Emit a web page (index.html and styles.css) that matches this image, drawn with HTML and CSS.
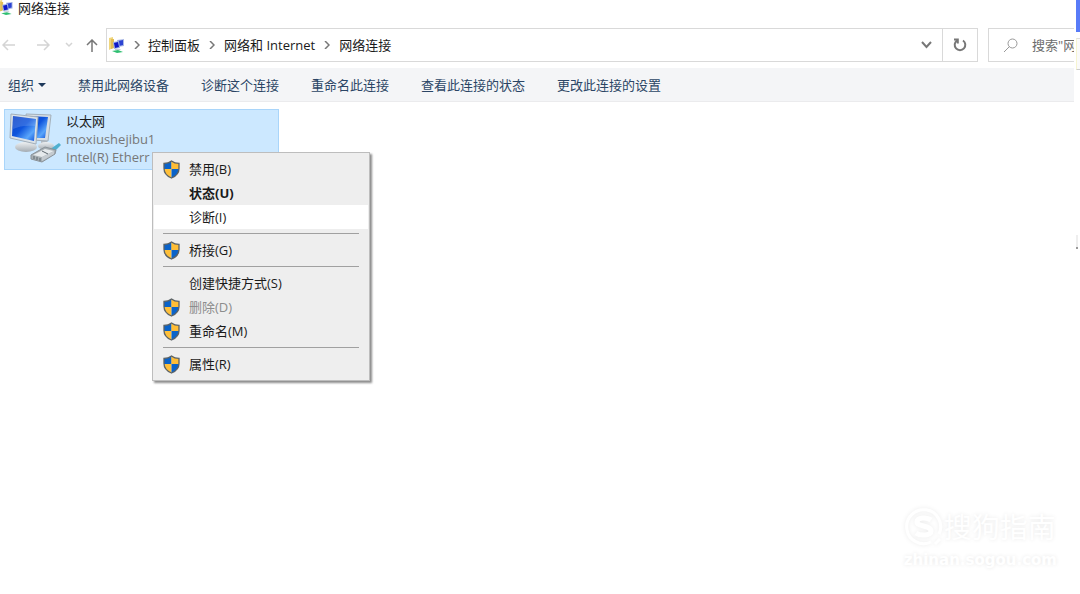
FILE: index.html
```html
<!DOCTYPE html>
<html lang="zh-CN">
<head>
    <meta charset="UTF-8">
    <meta name="viewport" content="width=device-width, initial-scale=1.0">
    <title>网络连接</title>
    <link rel="stylesheet" href="styles.css">
</head>
<body>
    <svg class="defs" aria-hidden="true">
        <defs>
            <linearGradient id="screen" x1="0" y1="0" x2="1" y2="1">
                <stop offset="0" stop-color="#0a3fc4"/>
                <stop offset="0.45" stop-color="#0f55dd"/>
                <stop offset="0.75" stop-color="#5aa6fb"/>
                <stop offset="1" stop-color="#0d4fd8"/>
            </linearGradient>
            <linearGradient id="metal" x1="0" y1="0" x2="0" y2="1">
                <stop offset="0" stop-color="#eef1f3"/>
                <stop offset="1" stop-color="#a3abb2"/>
            </linearGradient>
            <symbol id="shield" viewBox="0 0 17 19">
                <path d="M8.500 1C6.500 2.600 3.800 3.400 1 3.400V8.500C1 13 4 16.200 8.500 18Z" fill="#ffc03a"/>
                <path d="M8.500 1C6.500 2.600 3.800 3.400 1 3.400V9H8.500Z" fill="#0a63c9"/>
                <path d="M8.500 1C10.500 2.600 13.200 3.400 16 3.400V9H8.500Z" fill="#ffbd35"/>
                <path d="M16 9C15.800 13 13 16.200 8.500 18V9Z" fill="#0a63c9"/>
                <path d="M8.500 1C6.500 2.600 3.800 3.400 1 3.400V8.500C1 13 4 16.200 8.500 18C13 16.200 16 13 16 8.500V3.400C13.200 3.400 10.500 2.600 8.500 1Z" fill="none" stroke="#5b6266" stroke-width="1.300"/>
            </symbol>
            <symbol id="network" viewBox="0 0 17 17">
                <path d="M1 1L5 0V11L1 13Z" fill="#f0d67c"/>
                <path d="M3 2H6V11L3 12Z" fill="#e2bd55"/>
                <path d="M9 3L16 2V9L10 10Z" fill="#aab9e6"/>
                <path d="M10 4L15 3V8L11 9Z" fill="#2c43d2"/>
                <path d="M5 5L11 4L12 11L6 12Z" fill="#9fb3e6"/>
                <path d="M6 6L10 5L11 10L7 11Z" fill="#1018c8"/>
                <path d="M7 12H12L13 13H7Z" fill="#c3cbd5"/>
                <path d="M4 14L10 13L15 15L9 16Z" fill="#2fbf71"/>
            </symbol>
        </defs>
    </svg>

    <div class="screen">
        <main class="window">
            <header class="titlebar">
                <svg class="title-icon"><use href="#network"/></svg>
                <h1>网络连接</h1>
            </header>

            <div class="navbar">
                <div class="nav-buttons">
                    <button class="dim" aria-label="后退"><svg width="14" height="12" viewBox="0 0 14 12"><path d="M13 6H1M6 1L1 6L6 11"/></svg></button>
                    <button class="dim" aria-label="前进"><svg width="14" height="12" viewBox="0 0 14 12"><path d="M1 6H13M8 1L13 6L8 11"/></svg></button>
                    <button class="dim" aria-label="最近"><svg width="8" height="6" viewBox="0 0 8 6"><path d="M1 1L4 4L7 1"/></svg></button>
                    <button class="up" aria-label="向上"><svg width="12" height="14" viewBox="0 0 12 14"><path d="M6 13V1M1 6L6 1L11 6"/></svg></button>
                </div>
                <div class="address">
                    <nav class="crumbs">
                        <svg class="crumb-icon"><use href="#network"/></svg>
                        <svg class="arrow" viewBox="0 0 6 8"><path d="M1 0L5 4L1 8"/></svg>
                        <a href="#">控制面板</a>
                        <svg class="arrow" viewBox="0 0 6 8"><path d="M1 0L5 4L1 8"/></svg>
                        <a href="#">网络和 Internet</a>
                        <svg class="arrow" viewBox="0 0 6 8"><path d="M1 0L5 4L1 8"/></svg>
                        <a href="#">网络连接</a>
                    </nav>
                    <button class="history" aria-label="历史记录"><svg width="11" height="8" viewBox="0 0 11 8"><path d="M1 1L5.500 6L10 1"/></svg></button>
                    <button class="refresh" aria-label="刷新"><svg width="14" height="14" viewBox="0 0 14 14"><path d="M10 2.500A5.300 5.300 0 1 1 4 2.500M1 1.500H4.800V5.500"/></svg></button>
                </div>
                <label class="search">
                    <svg width="15" height="15" viewBox="0 0 15 15"><circle cx="9.500" cy="5.500" r="4.500"/><path d="M6.500 8.500L1 14"/></svg>
                    <input type="text" placeholder="搜索&quot;网" aria-label="搜索">
                </label>
            </div>

            <div class="toolbar">
                <button class="organize">组织 <span class="caret"></span></button>
                <button>禁用此网络设备</button>
                <button>诊断这个连接</button>
                <button>重命名此连接</button>
                <button>查看此连接的状态</button>
                <button>更改此连接的设置</button>
            </div>

            <section class="content">
                <div class="adapter">
                    <svg class="adapter-icon" viewBox="0 0 54 54">
                        <path d="M32 26L38 27V33L32 34Z" fill="#b4bcc3"/>
                        <ellipse cx="37" cy="34" rx="8" ry="4" fill="url(#metal)"/>
                        <path d="M17 2L42 3L39 29L22 28Z" fill="#d7dee4" stroke="#a3b0bb"/>
                        <path d="M19 4L39 5L36 26L24 26Z" fill="url(#screen)"/>
                        <path d="M15 28H22L23 35H14Z" fill="#b9c2ca"/>
                        <ellipse cx="17" cy="35" rx="11" ry="5" fill="url(#metal)"/>
                        <path d="M2 2L29 5L27 32L1 26Z" fill="#dbe2e8" stroke="#a3b0bb"/>
                        <path d="M4 4L27 7L25 29L3 24Z" fill="url(#screen)"/>
                        <path d="M4 4L27 7L26 14C18 13 10 14 4 17Z" fill="#fff" opacity="0.150"/>
                        <path d="M40 38L50 31L52 33L44 41Z" fill="#4fb0cf"/>
                        <path d="M22 43L36 35L47 38L46 42L33 50L22 47Z" fill="#a8b0b5" stroke="#8a9298"/>
                        <path d="M24 43L36 37L45 39L33 45Z" fill="#e6eaec"/>
                        <path d="M33 45L45 39V42L33 49Z" fill="#c5cbd0"/>
                        <path d="M25 44V47M28 45V48M31 46V49M33 39L39 42" stroke="#5e686f" fill="none"/>
                    </svg>
                    <div class="adapter-text">
                        <h2>以太网</h2>
                        <p>moxiushejibu1</p>
                        <p>Intel(R) Etherr</p>
                    </div>
                </div>

                <div class="context-menu" role="menu">
                    <button role="menuitem"><svg><use href="#shield"/></svg>禁用(B)</button>
                    <button role="menuitem" class="default">状态(U)</button>
                    <button role="menuitem" class="active">诊断(I)</button>
                    <hr>
                    <button role="menuitem"><svg><use href="#shield"/></svg>桥接(G)</button>
                    <hr>
                    <button role="menuitem">创建快捷方式(S)</button>
                    <button role="menuitem" disabled><svg><use href="#shield"/></svg>删除(D)</button>
                    <button role="menuitem"><svg><use href="#shield"/></svg>重命名(M)</button>
                    <hr>
                    <button role="menuitem"><svg><use href="#shield"/></svg>属性(R)</button>
                </div>
            </section>
        </main>

        <aside class="edge">
            <div class="edge-blue"></div>
            <div class="edge-panel"></div>
            <div class="edge-mark"></div>
        </aside>
    </div>

    <div class="watermark">
        <div class="brand">
            <svg width="40" height="40" viewBox="0 0 40 40">
                <path d="M27 35A17 17 0 1 1 35 27M31 37L36 32"/>
                <path class="brand-s" d="M27 13C23 10 13 10 13 15C13 20 27 18 27 24C27 29 16 29 12 26"/>
            </svg>
            <span>搜狗指南</span>
        </div>
        <div class="site">zhinan.sogou.com</div>
    </div>
</body>
</html>
```
FILE: styles.css
```css
* {
    box-sizing: border-box;
}
body {
    margin: 0;
    font-family: "Open Sans", "Noto Sans CJK SC", sans-serif;
    font-size: 13px;
    line-height: 18px;
    color: #1a1a1a;
    background: #fff;
    overflow: hidden;
}
h1, h2, p {
    margin: 0;
    font-size: 13px;
    font-weight: 400;
}
button {
    padding: 0;
    border: none;
    background: none;
    font: inherit;
    color: inherit;
}
a {
    color: inherit;
    text-decoration: none;
}
svg {
    flex: none;
}
.defs {
    position: absolute;
    width: 0;
    height: 0;
}
.screen {
    display: flex;
    min-height: 100vh;
}
.window {
    flex: 1;
    min-width: 0;
}

/* title */
.titlebar {
    display: flex;
    align-items: center;
    height: 16px;
    gap: 4px;
}
.title-icon {
    width: 17px;
    height: 16px;
    margin-left: -3px;
}

/* navigation */
.navbar {
    display: flex;
    height: 34px;
    margin-top: 12px;
}
.nav-buttons {
    display: flex;
    align-items: center;
    width: 106px;
    padding-left: 2px;
}
.nav-buttons button,
.address button {
    display: flex;
    align-items: center;
    justify-content: center;
}
.nav-buttons button {
    margin-right: 20px;
}
.nav-buttons button + .dim + .dim {
    margin-right: 13px;
    margin-left: -5px;
}
.nav-buttons .up {
    margin: 2px 0 0 0;
}
.navbar path,
.navbar circle {
    fill: none;
    stroke: #777;
    stroke-width: 1.5;
}
.nav-buttons .dim path {
    stroke: #d4d4d4;
}
.address {
    display: flex;
    flex: 1;
    border: 1px solid #d9d9d9;
}
.crumbs {
    display: flex;
    flex: 1;
    align-items: center;
}
.crumb-icon {
    width: 17px;
    height: 17px;
    margin-left: 1px;
}
.crumbs .crumb-icon path {
    stroke: none;
}
.arrow {
    width: 6px;
    height: 8px;
    margin: 0 9px;
}
.crumb-icon + .arrow {
    margin-right: 8px;
}
.history {
    width: 32px;
}
.refresh {
    width: 35px;
    border-left: 1px solid #d9d9d9;
}
.navbar .refresh path,
.navbar .history path {
    stroke-width: 2;
}
.search {
    display: flex;
    align-items: center;
    gap: 14px;
    width: 86px;
    margin-left: 10px;
    padding-left: 14px;
    border: 1px solid #d9d9d9;
    border-right: none;
}
.search circle,
.search path {
    stroke: #999;
    stroke-width: 1;
}
.search input {
    flex: 1;
    min-width: 0;
    padding: 0;
    border: none;
    outline: none;
    font: inherit;
}
.search input::placeholder {
    color: #6d6d6d;
}

/* commands */
.toolbar {
    display: flex;
    align-items: center;
    gap: 32px;
    height: 34px;
    margin-top: 6px;
    padding-left: 8px;
    background: #f4f5f7;
    border-bottom: 1px solid #ebebed;
    color: #2b4565;
}
.organize {
    display: flex;
    align-items: center;
    gap: 4px;
}
.caret {
    border: 4px solid transparent;
    border-top-color: #1e395b;
    border-bottom: none;
}

/* connections */
.content {
    position: relative;
    padding: 7px 4px;
}
.adapter {
    display: flex;
    gap: 3px;
    width: 275px;
    height: 61px;
    padding: 2px 4px;
    background: #cce8ff;
    border: 1px solid #a9d5fa;
}
.adapter-icon {
    width: 54px;
    height: 54px;
}
.adapter-text p {
    color: #777;
}
.context-menu {
    position: absolute;
    top: 50px;
    left: 152px;
    width: 218px;
    padding: 4px 1px;
    background: #eee;
    border: 1px solid #bdbdbd;
    box-shadow: 2px 2px 2px rgba(0, 0, 0, 0.45);
}
.context-menu button {
    display: flex;
    align-items: center;
    width: 100%;
    height: 24px;
    padding-left: 35px;
    color: #1a1a1a;
}
.context-menu svg {
    width: 17px;
    height: 19px;
    margin-left: -26px;
    margin-right: 9px;
}
.context-menu .default {
    font-weight: 700;
}
.context-menu .active {
    background: #fff;
}
.context-menu button:disabled {
    color: #8c8c8c;
}
.context-menu hr {
    height: 1px;
    margin: 4px 9px;
    border: none;
    background: #a0a0a0;
}

/* window behind on the right */
.edge {
    width: 6px;
    padding-left: 2px;
    background: #fff;
}
.edge-blue {
    height: 32px;
    background: #587bf8;
}
.edge-panel {
    height: 32px;
    margin-top: 6px;
    border-top: 1px solid #ddd;
    border-bottom: 1px solid #ccc;
    border-left: 1px solid #f7f5d0;
    background: #fafafa;
}
.edge-mark {
    width: 2px;
    height: 14px;
    margin-top: 165px;
    background: #eee;
    border-bottom: 2px solid #999;
}

.watermark {
    position: absolute;
    right: 23px;
    bottom: 25px;
    color: #fff;
    text-shadow: 0 0 4px rgba(0, 0, 0, 0.09);
}
.brand {
    display: flex;
    align-items: center;
    font-size: 28px;
    line-height: 40px;
}
.brand svg {
    fill: none;
    stroke: #fff;
    stroke-width: 3;
    filter: drop-shadow(0 0 2px rgba(0, 0, 0, 0.08));
}
.brand .brand-s {
    stroke-width: 5;
}
.site {
    margin-top: 4px;
    font-family: "DejaVu Sans", sans-serif;
    font-size: 15px;
    font-weight: 700;
}
```
